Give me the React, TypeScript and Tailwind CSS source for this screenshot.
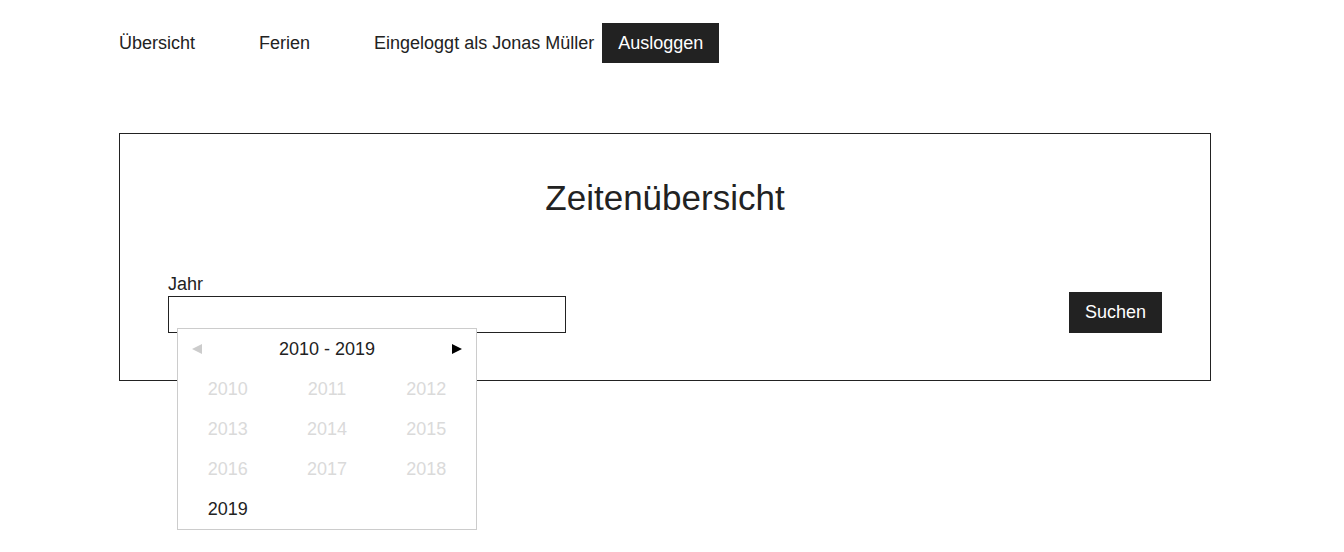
import React from "react";

const years = [2010, 2011, 2012, 2013, 2014, 2015, 2016, 2017, 2018, 2019];

function YearPicker() {
  return (
    <div className="absolute left-[9px] top-[32px] w-[300px] border border-[#cccccc] bg-white">
      <div className="flex h-10 items-center justify-between px-[14px]">
        <svg width="10" height="10" viewBox="0 0 10 10">
          <path d="M10 0 L0 5 L10 10 Z" fill="#cccccc" />
        </svg>
        <span className="text-[18px] text-[#222222]">2010 - 2019</span>
        <svg width="10" height="10" viewBox="0 0 10 10">
          <path d="M0 0 L10 5 L0 10 Z" fill="#000000" />
        </svg>
      </div>
      <div className="grid grid-cols-3">
        {years.map((y) => (
          <div
            key={y}
            className={
              "flex h-10 items-center justify-center text-[18px] " +
              (y === 2019 ? "text-[#222222]" : "text-[#dadada]")
            }
          >
            {y}
          </div>
        ))}
      </div>
    </div>
  );
}

function App() {
  return (
    <div className="min-h-screen bg-white font-['Liberation_Sans',Arial,sans-serif] leading-[1.15] text-[#222222]">
      <nav className="ml-[119px] flex items-center pt-[23px] text-[18px]">
        <a className="mr-16">Übersicht</a>
        <a className="mr-16">Ferien</a>
        <span>Eingeloggt als Jonas Müller</span>
        <button className="ml-2 h-10 bg-[#222222] px-4 leading-[1.15] text-white">Ausloggen</button>
      </nav>

      <div className="ml-[119px] mt-[70px] w-[1092px] border border-[#222222] px-12 pb-[47px] pt-[44px]">
        <h1 className="text-center text-[35px]">Zeitenübersicht</h1>
        <div className="mt-[56px] flex items-end justify-between">
          <div>
            <label className="block text-[18px]">Jahr</label>
            <div className="relative mt-px">
              <div className="h-[37px] w-[398px] border border-[#222222] bg-white" />
              <YearPicker />
            </div>
          </div>
          <button className="h-[41px] bg-[#222222] px-4 text-[18px] leading-[1.15] text-white">Suchen</button>
        </div>
      </div>
    </div>
  );
}

export default App;
